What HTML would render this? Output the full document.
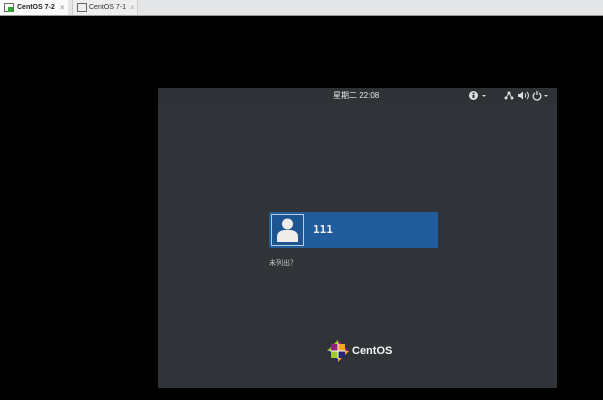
<!DOCTYPE html>
<html><head><meta charset="utf-8"><style>
*{margin:0;padding:0;box-sizing:border-box}
body{width:603px;height:400px;background:#000;position:relative;overflow:hidden;font-family:"Liberation Sans","Noto Sans CJK SC",sans-serif}
.tabs{position:absolute;left:0;top:0;width:603px;height:16px;background:#e4e5e6;border-bottom:1px solid #9a9a9a}
.tab{position:absolute;top:0;height:15px;font-size:7px;line-height:15px;color:#222}
.t1{left:0;width:68px;background:#fbfbfb;font-weight:bold}
.t2{left:72px;width:66px;background:#eeeeef;border-left:1px solid #ccc;border-right:1px solid #ccc;color:#333}
.ic{position:absolute;top:3px;width:10px;height:9px;border:1px solid #666}
.x{position:absolute;top:0;color:#aaa;font-size:8px}
.scr{position:absolute;left:158px;top:88px;width:399px;height:300px;background:#303438}
.bar{position:absolute;left:0;top:0;width:399px;height:15px;background:#2e3236}
.time{position:absolute;left:175px;top:2px;font-size:8px;color:#e8e8e8}
.btn{position:absolute;left:111px;top:124px;width:169px;height:36px;background:#215d9c;border-radius:2px}
.av{position:absolute;left:2px;top:2px;width:33px;height:32px;border:1px solid #b8cde0;background:#1e5590}
.name{position:absolute;left:44px;top:11px;font-size:11px;font-weight:bold;color:#f0f0f0;font-family:"DejaVu Sans Mono",monospace}
.nl{position:absolute;left:111px;top:170px;font-size:7px;color:#c8c8c8}
.logo{position:absolute;left:169px;top:252px}
.ct{position:absolute;left:194px;top:257px;font-size:11px;font-weight:bold;color:#f4f4f4}
</style></head><body>
<div class="tabs">
 <div class="tab t1"><div class="ic" style="left:4px"></div><div style="position:absolute;left:8px;top:7px;width:5px;height:5px;background:#2ea82e"></div><span style="position:absolute;left:17px">CentOS 7-2</span><span class="x" style="left:60px">×</span></div>
 <div class="tab t2"><div class="ic" style="left:4px"></div><span style="position:absolute;left:16px">CentOS 7-1</span><span class="x" style="left:57px">×</span></div>
</div>
<div class="scr">
 <div class="bar">
  <div class="time">星期二 22:08</div>
  <svg style="position:absolute;left:310px;top:2px" width="90" height="11">
   <circle cx="5.5" cy="5.5" r="4.5" fill="#ddd"/><circle cx="5.5" cy="3.5" r="1" fill="#2e3236"/><rect x="4.5" y="5" width="2" height="3" fill="#2e3236"/>
   <polygon points="14,5 18,5 16,7" fill="#ddd"/>
   <circle cx="41" cy="3" r="1.5" fill="#ddd"/><circle cx="38" cy="8" r="1.5" fill="#ddd"/><circle cx="44" cy="8" r="1.5" fill="#ddd"/><path d="M41 3L38 8M41 3L44 8" stroke="#ddd"/>
   <polygon points="50,4 52,4 55,1.5 55,9.5 52,7 50,7" fill="#ddd"/><path d="M57 3.5q1.5 2 0 4M59 2q3 3.5 0 7" stroke="#ddd" fill="none"/>
   <path d="M67 3a3.8 3.8 0 1 0 4 0" stroke="#ddd" stroke-width="1.3" fill="none"/><path d="M69 1v4" stroke="#ddd" stroke-width="1.3"/>
   <polygon points="76,5 80,5 78,7" fill="#ddd"/>
  </svg>
 </div>
 <div class="btn"><div class="av"><svg width="31" height="30"><circle cx="15.5" cy="9" r="5.5" fill="#eeece8"/><path d="M5 27v-5q0-6 7-7h7q7 1 7 7v5z" fill="#eeece8"/></svg></div><div class="name">111</div></div>
 <div class="nl">未列出？</div>
 <svg class="logo" width="22" height="22" viewBox="0 0 22 22">
  <polygon points="11,0 11,11 0,11" fill="#9ccd2a"/>
  <polygon points="11,0 22,11 11,11" fill="#932279"/>
  <polygon points="0,11 11,11 11,22" fill="#262577"/>
  <polygon points="22,11 11,11 11,22" fill="#efa724"/>
  <rect x="4" y="4" width="6.5" height="6.5" fill="#932279"/><rect x="11.5" y="4" width="6.5" height="6.5" fill="#efa724"/><rect x="4" y="11.5" width="6.5" height="6.5" fill="#9ccd2a"/><rect x="11.5" y="11.5" width="6.5" height="6.5" fill="#262577"/>
  <path d="M11 3v16M3 11h16" stroke="#fff" stroke-width="1"/>
 </svg>
 <div class="ct">CentOS</div>
</div>
</body></html>
